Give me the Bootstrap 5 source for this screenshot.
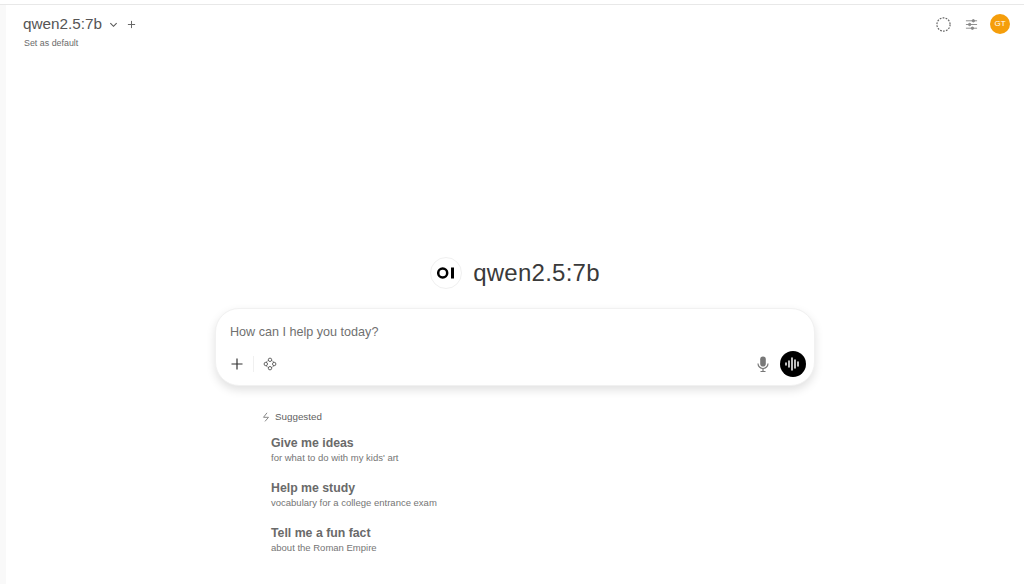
<!DOCTYPE html>
<html lang="en">
<head>
<meta charset="utf-8">
<title>qwen2.5:7b</title>
<link href="https://cdn.jsdelivr.net/npm/bootstrap@5.3.0/dist/css/bootstrap.min.css" rel="stylesheet">
<style>
html,body{height:584px;overflow:hidden;background:#fff}
body{font-family:"Liberation Sans",Inter,sans-serif;color:#4b5563}
.top-rule{height:5px;border-bottom:1px solid #e8e8e8}
.shell{height:579px}
.side-strip{width:6px;background:#f9f9f9;flex:none}
.main-pane{min-width:0}
.head-area{padding:9px 14px 0 17px;height:200px;flex:none}
.model-name{font:15.3px/20px "Liberation Sans",sans-serif;color:#555}
.set-default{font-size:8.9px;line-height:12px;color:#6b6b6b;margin:3px 0 0 1px}
.icon-slot{width:20px;height:20px;display:flex;align-items:center;justify-content:center}
.avatar-dot{width:20px;height:20px;border-radius:50%;background:#f59e0b;color:#fff;font-size:8px;display:flex;align-items:center;justify-content:center;margin-left:1px}
.head-tools{gap:8px}
.hero-row{height:32px;margin:52px 0 19px}
.hero-logo{width:32px;height:32px;border-radius:50%;border:1px solid #f0f0f0;background:#fff;display:flex;align-items:center;justify-content:center}
.hero-title{font:24px/32px "Liberation Sans",sans-serif;color:#3a3a3a;letter-spacing:.25px;margin-left:3px}
.prompt-box{width:600px;height:78px;margin-left:209px;border:1px solid #f1f1f1;border-radius:24px;box-shadow:0 4px 10px rgba(0,0,0,.12);background:#fff;padding:14px 8px 8px 14px}
.prompt-text{font-size:12.6px;line-height:18px;color:#707070}
.tool-row{margin-top:10px;height:26px}
.tool-sep{width:1px;height:16px;background:#f0f0f0;margin:0 9px}
.voice-btn{width:26px;height:26px;border-radius:50%;background:#000;display:flex;align-items:center;justify-content:center}
.suggest-area{margin:24px 0 0 255px}
.suggest-head{font-size:9.8px;line-height:14px;color:#5f5f5f;font-weight:400}
.suggest-item{margin-left:10px;height:45px}
.suggest-list{margin-top:10px}
.suggest-title{font-size:12.3px;line-height:18px;font-weight:700;color:#6a6a6a}
.suggest-sub{font-size:9.5px;line-height:12px;color:#757575;margin-top:0}
</style>
</head>
<body>
<div class="top-rule"></div>
<div class="shell d-flex">
  <div class="side-strip"></div>
  <div class="main-pane flex-grow-1 d-flex flex-column">
    <div class="head-area d-flex justify-content-between align-items-start">
      <div>
        <div class="d-flex align-items-center">
          <span class="model-name">qwen2.5:7b</span>
          <svg style="margin-left:7px" width="9" height="9" viewBox="0 0 10 10" fill="none" stroke="#555" stroke-width="1.2"><path d="M1.5 3.5 5 7l3.5-3.5"/></svg>
          <svg style="margin-left:9px" width="9" height="9" viewBox="0 0 10 10" fill="none" stroke="#666" stroke-width="1.1"><path d="M5 1v8M1 5h8"/></svg>
        </div>
        <div class="set-default">Set as default</div>
      </div>
      <div class="d-flex align-items-center head-tools">
        <span class="icon-slot"><svg width="15" height="15" viewBox="0 0 15 15" fill="none" stroke="#666" stroke-width="1.2" stroke-dasharray="1.8 1.2"><circle cx="7.5" cy="7.5" r="6.6"/></svg></span>
        <span class="icon-slot"><svg width="13" height="13" viewBox="0 0 14 14" fill="none" stroke="#888" stroke-width="1"><path d="M1 3h12M1 7h12M1 11h12"/><circle cx="9" cy="3" r="1.3" fill="#888"/><circle cx="5" cy="7" r="1.3" fill="#888"/><circle cx="8" cy="11" r="1.3" fill="#888"/></svg></span>
        <span class="avatar-dot">GT</span>
      </div>
    </div>
    <div class="hero-row d-flex justify-content-center align-items-center gap-2">
      <span class="hero-logo"><svg width="18" height="12" viewBox="0 0 18 12"><circle cx="5.7" cy="6" r="4.5" fill="none" stroke="#000" stroke-width="2.5"/><rect x="14" y="0.5" width="3" height="11" fill="#000"/></svg></span>
      <span class="hero-title">qwen2.5:7b</span>
    </div>
    <div class="prompt-box">
      <div class="prompt-text">How can I help you today?</div>
      <div class="tool-row d-flex align-items-center">
        <svg width="14" height="14" viewBox="0 0 14 14" fill="none" stroke="#333" stroke-width="1.2"><path d="M7 1.5v11M1.5 7h11"/></svg>
        <span class="tool-sep"></span>
        <svg width="14" height="14" viewBox="0 0 14 14" fill="none" stroke="#555" stroke-width=".9"><circle cx="7" cy="2.8" r="1.7"/><circle cx="7" cy="11.2" r="1.7"/><circle cx="2.8" cy="7" r="1.7"/><circle cx="11.2" cy="7" r="1.7"/><path d="M9.2 3.6 10.4 4.8M3.6 4.8 4.8 3.6M3.6 9.2 4.8 10.4M9.2 10.4 10.4 9.2"/></svg>
        <svg class="ms-auto" style="margin-right:10px" width="14" height="16" viewBox="0 0 14 16"><rect x="4.2" y="0.5" width="5.6" height="10" rx="2.8" fill="#777"/><path d="M2 7.5a5 5 0 0 0 10 0M7 12.5V15.5M4.5 15.5h5" fill="none" stroke="#777" stroke-width="1.2"/></svg>
        <span class="voice-btn"><svg width="16" height="14" viewBox="0 0 16 14" stroke="#fff" stroke-width="1.5" stroke-linecap="round"><path d="M1 6v2M4 4v6M7 1v12M10 3v8M13 5v4"/></svg></span>
      </div>
    </div>
    <div class="suggest-area">
      <div class="suggest-head d-flex align-items-center gap-1">
        <svg width="10" height="10" viewBox="0 0 10 10" fill="none" stroke="#888" stroke-width="1"><path d="M6 .8 2.5 5.3h5L4 9.4"/></svg>
        <span>Suggested</span>
      </div>
      <div class="suggest-list">
        <div class="suggest-item"><div class="suggest-title">Give me ideas</div><div class="suggest-sub">for what to do with my kids' art</div></div>
        <div class="suggest-item"><div class="suggest-title">Help me study</div><div class="suggest-sub">vocabulary for a college entrance exam</div></div>
        <div class="suggest-item"><div class="suggest-title">Tell me a fun fact</div><div class="suggest-sub">about the Roman Empire</div></div>
      </div>
    </div>
  </div>
</div>
<script src="https://cdn.jsdelivr.net/npm/bootstrap@5.3.0/dist/js/bootstrap.bundle.min.js"></script>
</body>
</html>
